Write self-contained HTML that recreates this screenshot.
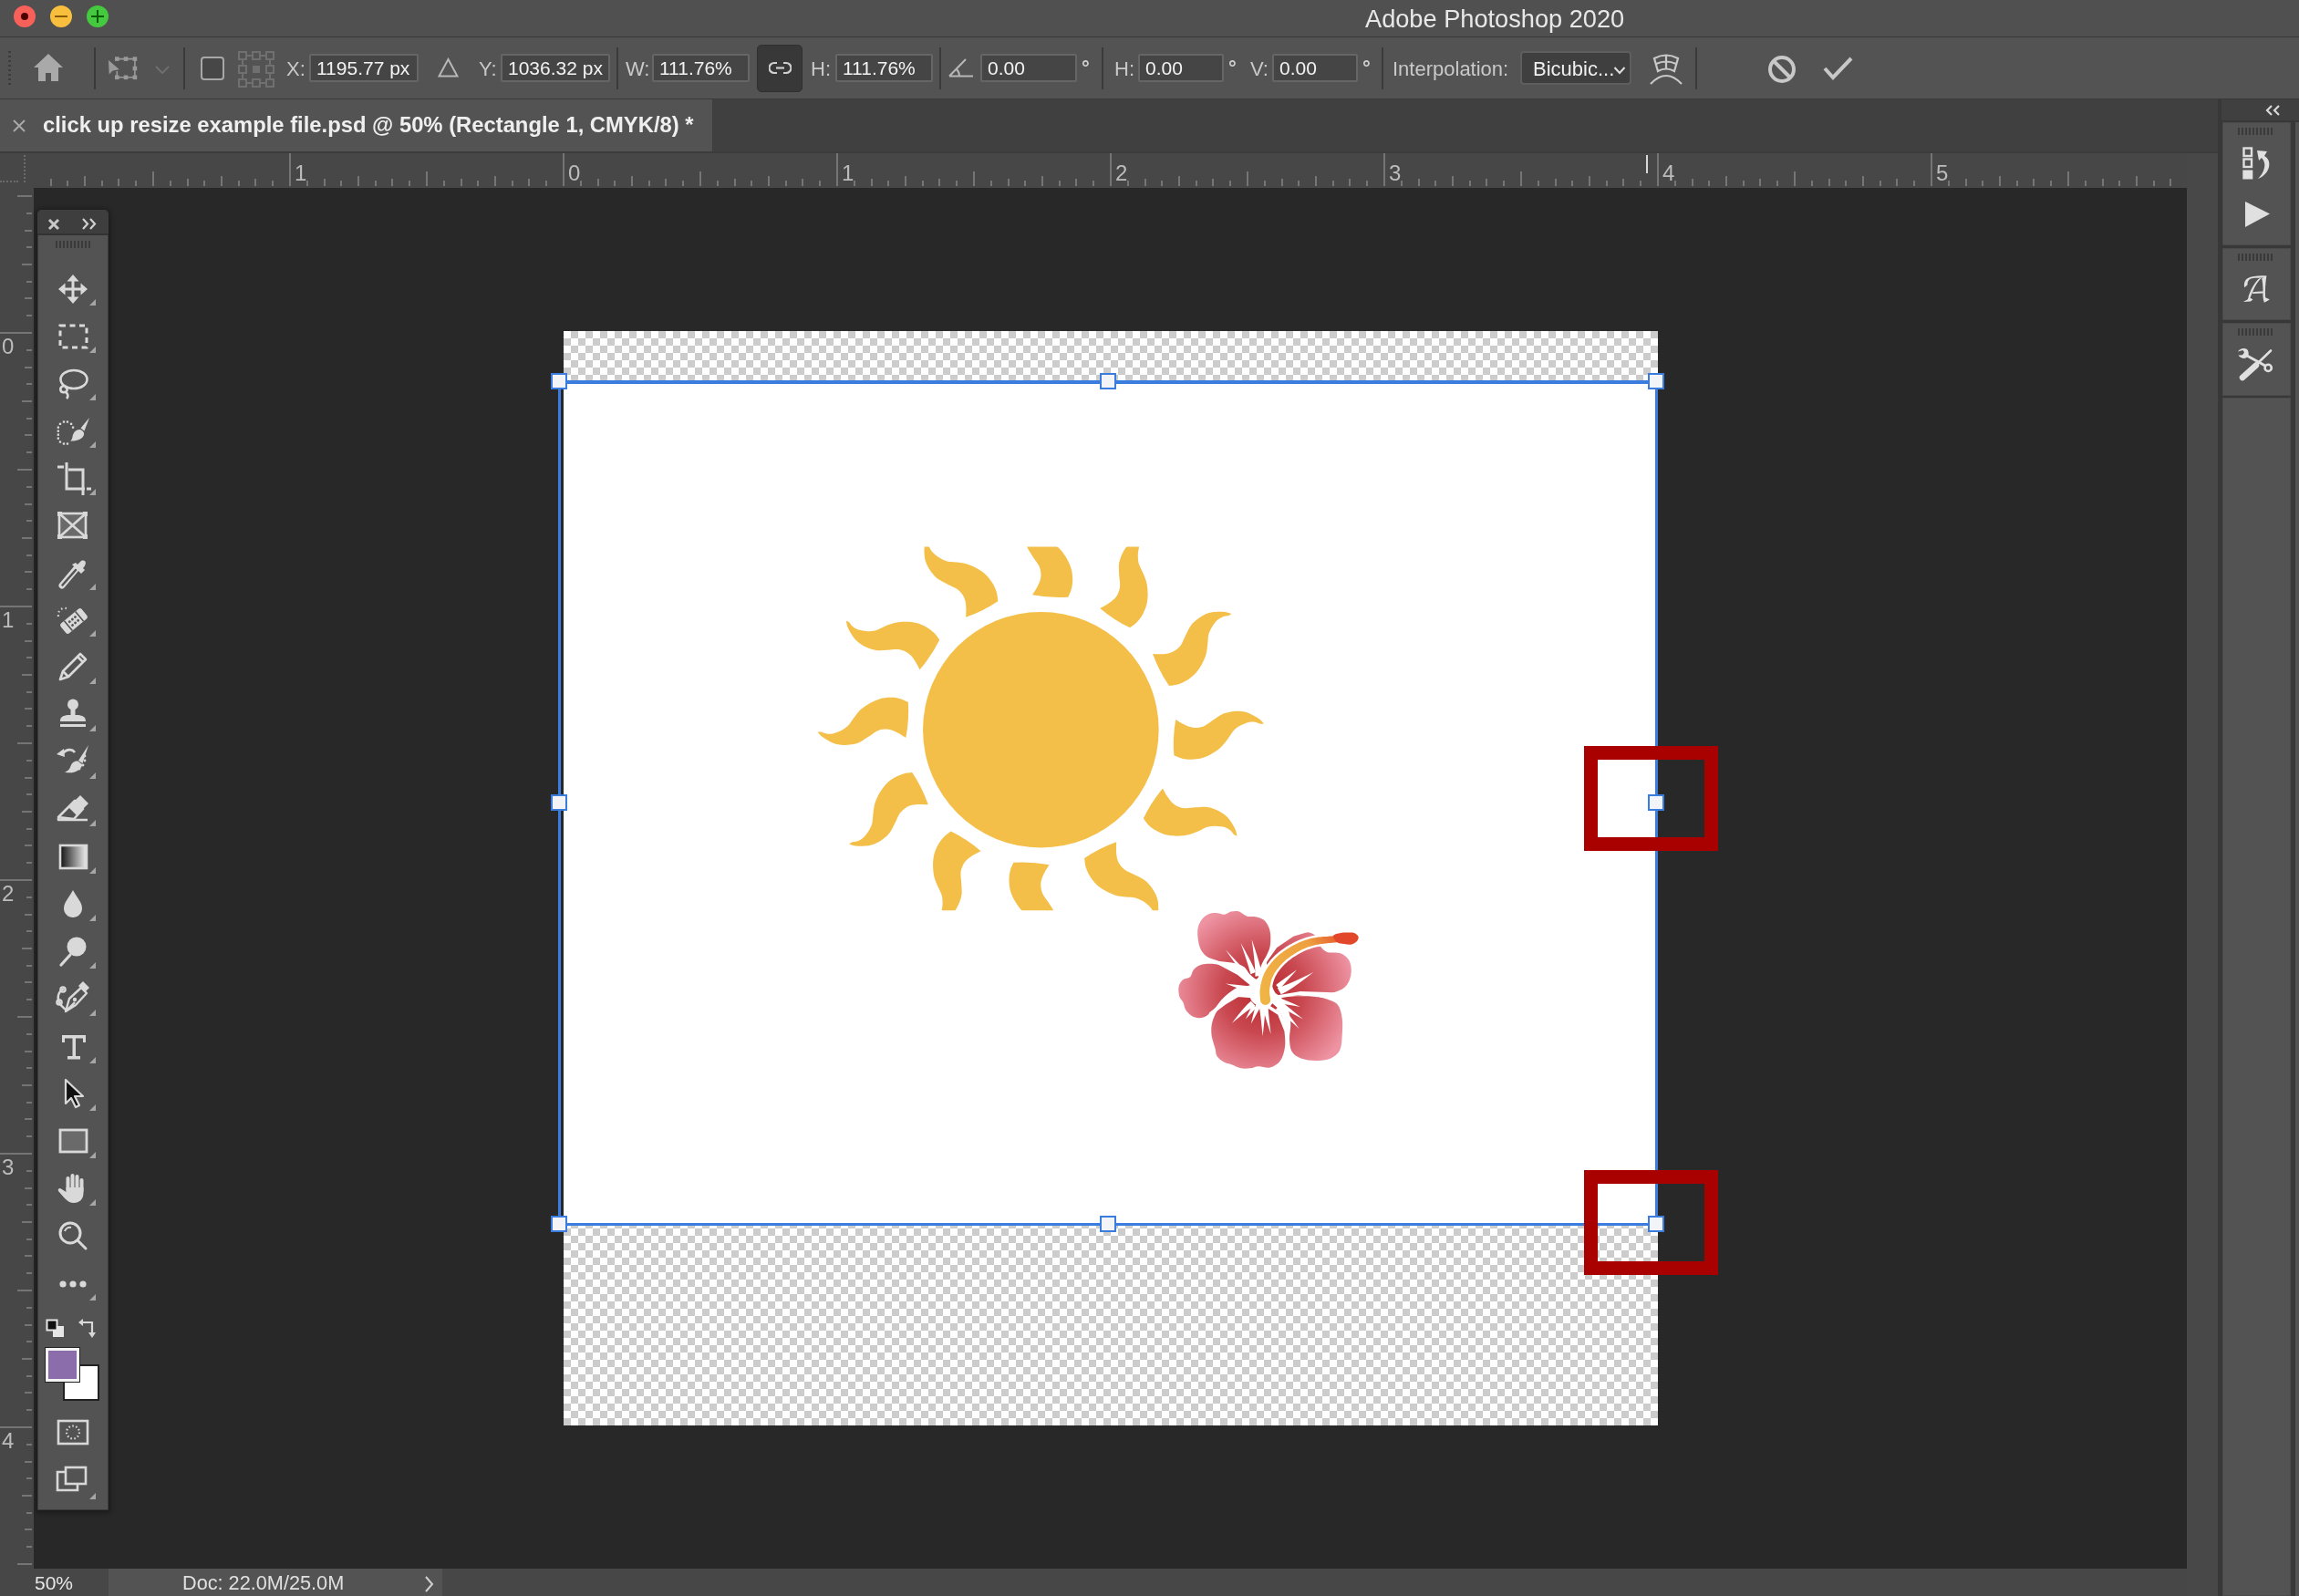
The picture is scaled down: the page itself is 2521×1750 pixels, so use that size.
<!DOCTYPE html><html><head><meta charset="utf-8"><style>
*{box-sizing:border-box}
html,body{margin:0;padding:0;width:2521px;height:1750px;overflow:hidden;background:#282828;font-family:"Liberation Sans",sans-serif}
.a{position:absolute}
.t{will-change:transform}
.lbl{position:absolute;will-change:transform;color:#c9c9c9;font-size:22px;line-height:1}
.inp{position:absolute;background:#454545;border:2px solid #666;border-radius:2px;color:#f2f2f2;font-size:21px;line-height:1}
.inp span{will-change:transform;position:absolute;left:6px;top:3px}
.rl{will-change:transform;color:#bcbcbc;font-size:24px;line-height:1}
.sep{position:absolute;width:2px;background:#3a3a3a}
</style></head><body><div class="a" style="left:0;top:0;width:2521px;height:40px;background:#505050"></div>
<div class="a" style="left:0;top:40px;width:2521px;height:1px;background:#383838"></div>
<div class="a" style="left:15px;top:6px;width:24px;height:24px;border-radius:50%;background:#f8605a"></div>
<div class="a" style="left:55px;top:6px;width:24px;height:24px;border-radius:50%;background:#f8bf3e"></div>
<div class="a" style="left:95px;top:6px;width:24px;height:24px;border-radius:50%;background:#45c93f"></div>
<div class="a" style="left:23px;top:14px;width:8px;height:8px;border-radius:50%;background:#4d0000"></div>
<div class="a" style="left:60px;top:17px;width:14px;height:2px;background:#8a5a00"></div>
<div class="a" style="left:100px;top:17px;width:14px;height:2px;background:#0a5a00"></div>
<div class="a" style="left:106px;top:11px;width:2px;height:14px;background:#0a5a00"></div>
<div class="a t" style="left:1497px;top:7px;font-size:27.2px;line-height:1;color:#e8e8e8;white-space:nowrap">Adobe Photoshop 2020</div>
<div class="a" style="left:0;top:41px;width:2521px;height:67px;background:#535353"></div>
<div class="a" style="left:0;top:108px;width:2521px;height:1px;background:#3a3a3a"></div>
<div class="a" style="left:9px;top:56px;width:3px;height:38px;background:repeating-linear-gradient(#3c3c3c 0 2px,transparent 2px 5px)"></div><svg class="a" style="left:36px;top:58px" width="34" height="32" viewBox="0 0 34 32"><path d="M17,1 L33,16 L28,16 L28,31 L20,31 L20,22 L14,22 L14,31 L6,31 L6,16 L1,16 Z" fill="#a9a9a9"/></svg><div class="sep" style="left:103px;top:52px;height:46px"></div><div class="sep" style="left:201px;top:52px;height:46px"></div><div class="sep" style="left:676px;top:52px;height:46px"></div><div class="sep" style="left:1030px;top:52px;height:46px"></div><div class="sep" style="left:1208px;top:52px;height:46px"></div><div class="sep" style="left:1515px;top:52px;height:46px"></div><div class="sep" style="left:1859px;top:52px;height:46px"></div><svg class="a" style="left:118px;top:60px" width="34" height="30" viewBox="0 0 34 30"><g fill="none" stroke="#9a9a9a" stroke-width="1.6"><path d="M10.3,4.6 H29.9 V24.8 H10.3 V18"/></g><g fill="#9a9a9a"><rect x="8.0" y="2.3" width="4.6" height="4.6"/><rect x="17.7" y="2.3" width="4.6" height="4.6"/><rect x="27.6" y="2.3" width="4.6" height="4.6"/><rect x="27.6" y="12.7" width="4.6" height="4.6"/><rect x="27.6" y="22.5" width="4.6" height="4.6"/><rect x="17.7" y="22.5" width="4.6" height="4.6"/><rect x="8.0" y="22.5" width="4.6" height="4.6"/></g><path d="M0.5,5 L1.2,22.5 L5.5,18 L13.8,16.5 Z" fill="#9a9a9a" stroke="#535353" stroke-width="1"/></svg><svg class="a" style="left:170px;top:72px" width="16" height="10" viewBox="0 0 16 10"><path d="M1,1 L8,8 L15,1" fill="none" stroke="#6f6f6f" stroke-width="2"/></svg><div class="a" style="left:220px;top:62px;width:26px;height:26px;border:2px solid #a8a8a8;border-radius:4px;background:#474747"></div><svg class="a" style="left:261px;top:56px" width="40" height="40" viewBox="0 0 40 40"><g fill="none" stroke="#707070" stroke-width="2"><rect x="1" y="1" width="8" height="8"/><rect x="1" y="16" width="8" height="8"/><rect x="1" y="31" width="8" height="8"/><rect x="16" y="1" width="8" height="8"/><rect x="16" y="31" width="8" height="8"/><rect x="31" y="1" width="8" height="8"/><rect x="31" y="16" width="8" height="8"/><rect x="31" y="31" width="8" height="8"/><path d="M9,5 H16 M24,5 H31 M9,35 H16 M24,35 H31 M5,9 V16 M5,24 V31 M35,9 V16 M35,24 V31"/></g><rect x="16" y="16" width="8" height="8" fill="#707070"/></svg><div class="lbl" style="left:314px;top:65px">X:</div><div class="inp" style="left:339px;top:59px;width:120px;height:31px"><span>1195.77 px</span></div><svg class="a" style="left:480px;top:63px" width="23" height="22" viewBox="0 0 23 22"><path d="M11.5,2 L21.5,20.5 L1.5,20.5 Z" fill="none" stroke="#b8b8b8" stroke-width="2"/></svg><div class="lbl" style="left:525px;top:65px">Y:</div><div class="inp" style="left:549px;top:59px;width:120px;height:31px"><span>1036.32 px</span></div><div class="lbl" style="left:686px;top:65px">W:</div><div class="inp" style="left:715px;top:59px;width:107px;height:31px"><span>111.76%</span></div><div class="a" style="left:830px;top:49px;width:50px;height:52px;background:#383838;border:1px solid #2f2f2f;border-radius:5px"></div><svg class="a" style="left:843px;top:66px" width="25" height="18" viewBox="0 0 25 18"><g fill="none" stroke="#d0d0d0" stroke-width="2.2"><path d="M9,3 H6 A5.5,5.5 0 0 0 6,14 H9"/><path d="M16,3 H19 A5.5,5.5 0 0 1 19,14 H16"/><path d="M8,8.5 H17"/></g></svg><div class="lbl" style="left:889px;top:65px">H:</div><div class="inp" style="left:916px;top:59px;width:107px;height:31px"><span>111.76%</span></div><svg class="a" style="left:1040px;top:63px" width="28" height="22" viewBox="0 0 28 22"><g fill="none" stroke="#b8b8b8" stroke-width="2"><path d="M1,20.5 H27 M1,20.5 L19,2"/><path d="M12,20.5 A11,11 0 0 0 9,13"/></g></svg><div class="inp" style="left:1075px;top:59px;width:106px;height:31px"><span>0.00</span></div><div class="a" style="left:1186px;top:62px;color:#d0d0d0;font-size:22px;font-weight:bold;will-change:transform">°</div><div class="lbl" style="left:1222px;top:65px">H:</div><div class="inp" style="left:1248px;top:59px;width:94px;height:31px"><span>0.00</span></div><div class="a" style="left:1347px;top:62px;color:#d0d0d0;font-size:22px;font-weight:bold;will-change:transform">°</div><div class="lbl" style="left:1371px;top:65px">V:</div><div class="inp" style="left:1395px;top:59px;width:94px;height:31px"><span>0.00</span></div><div class="a" style="left:1494px;top:62px;color:#d0d0d0;font-size:22px;font-weight:bold;will-change:transform">°</div><div class="lbl" style="left:1527px;top:65px">Interpolation:</div><div class="a" style="left:1667px;top:56px;width:122px;height:37px;background:#3f3f3f;border:2px solid #5e5e5e;border-radius:4px"></div><div class="a t" style="left:1681px;top:65px;color:#f0f0f0;font-size:22px;line-height:1;white-space:nowrap">Bicubic...</div><svg class="a" style="left:1769px;top:72px" width="14" height="10" viewBox="0 0 14 10"><path d="M1.5,2 L7,8 L12.5,2" fill="none" stroke="#e0e0e0" stroke-width="2"/></svg><svg class="a" style="left:1808px;top:58px" width="38" height="36" viewBox="0 0 38 36"><g fill="none" stroke="#c8c8c8" stroke-width="2.2"><path d="M6,6 Q19,-1 32,6 L28,20 Q19,15 10,20 Z"/><path d="M19,2 V17 M8,12 Q19,7 30,12"/><path d="M2,34 Q19,16 36,34"/></g></svg><svg class="a" style="left:1937px;top:59px" width="34" height="34" viewBox="0 0 34 34"><g fill="none" stroke="#c8c8c8" stroke-width="4"><circle cx="17" cy="17" r="13"/><path d="M8,8 L26,26"/></g></svg><svg class="a" style="left:1999px;top:61px" width="34" height="28" viewBox="0 0 34 28"><path d="M2,14 L11,24 L31,3" fill="none" stroke="#c8c8c8" stroke-width="4"/></svg>
<div class="a" style="left:0;top:109px;width:2521px;height:58px;background:#404040"></div>
<div class="a" style="left:0;top:109px;width:781px;height:57px;background:#535353"></div>
<div class="a" style="left:781px;top:109px;width:1px;height:57px;background:#3e3e3e"></div>
<div class="a" style="left:0;top:166px;width:2436px;height:2px;background:#3c3c3c"></div>
<div class="a t" style="left:47px;top:125px;font-size:23.8px;font-weight:bold;line-height:1;color:#efefef;white-space:nowrap">click up resize example file.psd @ 50% (Rectangle 1, CMYK/8) *</div>
<svg class="a" style="left:14px;top:131px" width="14" height="14" viewBox="0 0 14 14"><path d="M1,1 L13,13 M13,1 L1,13" stroke="#a8a8a8" stroke-width="2"/></svg>
<div class="a" style="left:0;top:168px;width:2398px;height:38px;background:#474747"></div>
<div class="a" style="left:0;top:168px;width:37px;height:1582px;background:#474747"></div>
<svg class="a" style="left:0;top:0" width="2521" height="210"><g fill="#757575"><rect x="55" y="196" width="2" height="8"/><rect x="73" y="198" width="2" height="6"/><rect x="92" y="193" width="2" height="11"/><rect x="111" y="198" width="2" height="6"/><rect x="129" y="196" width="2" height="8"/><rect x="148" y="198" width="2" height="6"/><rect x="167" y="188" width="2" height="16"/><rect x="186" y="198" width="2" height="6"/><rect x="205" y="196" width="2" height="8"/><rect x="223" y="198" width="2" height="6"/><rect x="242" y="193" width="2" height="11"/><rect x="261" y="198" width="2" height="6"/><rect x="279" y="196" width="2" height="8"/><rect x="298" y="198" width="2" height="6"/><rect x="317" y="168" width="2" height="36"/><rect x="336" y="198" width="2" height="6"/><rect x="355" y="196" width="2" height="8"/><rect x="373" y="198" width="2" height="6"/><rect x="392" y="193" width="2" height="11"/><rect x="411" y="198" width="2" height="6"/><rect x="429" y="196" width="2" height="8"/><rect x="448" y="198" width="2" height="6"/><rect x="467" y="188" width="2" height="16"/><rect x="486" y="198" width="2" height="6"/><rect x="505" y="196" width="2" height="8"/><rect x="523" y="198" width="2" height="6"/><rect x="542" y="193" width="2" height="11"/><rect x="561" y="198" width="2" height="6"/><rect x="579" y="196" width="2" height="8"/><rect x="598" y="198" width="2" height="6"/><rect x="617" y="168" width="2" height="36"/><rect x="636" y="198" width="2" height="6"/><rect x="655" y="196" width="2" height="8"/><rect x="673" y="198" width="2" height="6"/><rect x="692" y="193" width="2" height="11"/><rect x="711" y="198" width="2" height="6"/><rect x="729" y="196" width="2" height="8"/><rect x="748" y="198" width="2" height="6"/><rect x="767" y="188" width="2" height="16"/><rect x="786" y="198" width="2" height="6"/><rect x="805" y="196" width="2" height="8"/><rect x="823" y="198" width="2" height="6"/><rect x="842" y="193" width="2" height="11"/><rect x="861" y="198" width="2" height="6"/><rect x="879" y="196" width="2" height="8"/><rect x="898" y="198" width="2" height="6"/><rect x="917" y="168" width="2" height="36"/><rect x="936" y="198" width="2" height="6"/><rect x="955" y="196" width="2" height="8"/><rect x="973" y="198" width="2" height="6"/><rect x="992" y="193" width="2" height="11"/><rect x="1011" y="198" width="2" height="6"/><rect x="1029" y="196" width="2" height="8"/><rect x="1048" y="198" width="2" height="6"/><rect x="1067" y="188" width="2" height="16"/><rect x="1086" y="198" width="2" height="6"/><rect x="1105" y="196" width="2" height="8"/><rect x="1123" y="198" width="2" height="6"/><rect x="1142" y="193" width="2" height="11"/><rect x="1161" y="198" width="2" height="6"/><rect x="1179" y="196" width="2" height="8"/><rect x="1198" y="198" width="2" height="6"/><rect x="1217" y="168" width="2" height="36"/><rect x="1236" y="198" width="2" height="6"/><rect x="1255" y="196" width="2" height="8"/><rect x="1273" y="198" width="2" height="6"/><rect x="1292" y="193" width="2" height="11"/><rect x="1311" y="198" width="2" height="6"/><rect x="1329" y="196" width="2" height="8"/><rect x="1348" y="198" width="2" height="6"/><rect x="1367" y="188" width="2" height="16"/><rect x="1386" y="198" width="2" height="6"/><rect x="1405" y="196" width="2" height="8"/><rect x="1423" y="198" width="2" height="6"/><rect x="1442" y="193" width="2" height="11"/><rect x="1461" y="198" width="2" height="6"/><rect x="1479" y="196" width="2" height="8"/><rect x="1498" y="198" width="2" height="6"/><rect x="1517" y="168" width="2" height="36"/><rect x="1536" y="198" width="2" height="6"/><rect x="1555" y="196" width="2" height="8"/><rect x="1573" y="198" width="2" height="6"/><rect x="1592" y="193" width="2" height="11"/><rect x="1611" y="198" width="2" height="6"/><rect x="1629" y="196" width="2" height="8"/><rect x="1648" y="198" width="2" height="6"/><rect x="1667" y="188" width="2" height="16"/><rect x="1686" y="198" width="2" height="6"/><rect x="1705" y="196" width="2" height="8"/><rect x="1723" y="198" width="2" height="6"/><rect x="1742" y="193" width="2" height="11"/><rect x="1761" y="198" width="2" height="6"/><rect x="1779" y="196" width="2" height="8"/><rect x="1798" y="198" width="2" height="6"/><rect x="1817" y="168" width="2" height="36"/><rect x="1836" y="198" width="2" height="6"/><rect x="1855" y="196" width="2" height="8"/><rect x="1873" y="198" width="2" height="6"/><rect x="1892" y="193" width="2" height="11"/><rect x="1911" y="198" width="2" height="6"/><rect x="1929" y="196" width="2" height="8"/><rect x="1948" y="198" width="2" height="6"/><rect x="1967" y="188" width="2" height="16"/><rect x="1986" y="198" width="2" height="6"/><rect x="2005" y="196" width="2" height="8"/><rect x="2023" y="198" width="2" height="6"/><rect x="2042" y="193" width="2" height="11"/><rect x="2061" y="198" width="2" height="6"/><rect x="2079" y="196" width="2" height="8"/><rect x="2098" y="198" width="2" height="6"/><rect x="2117" y="168" width="2" height="36"/><rect x="2136" y="198" width="2" height="6"/><rect x="2155" y="196" width="2" height="8"/><rect x="2173" y="198" width="2" height="6"/><rect x="2192" y="193" width="2" height="11"/><rect x="2211" y="198" width="2" height="6"/><rect x="2229" y="196" width="2" height="8"/><rect x="2248" y="198" width="2" height="6"/><rect x="2267" y="188" width="2" height="16"/><rect x="2286" y="198" width="2" height="6"/><rect x="2305" y="196" width="2" height="8"/><rect x="2323" y="198" width="2" height="6"/><rect x="2342" y="193" width="2" height="11"/><rect x="2361" y="198" width="2" height="6"/><rect x="2379" y="196" width="2" height="8"/></g></svg><div class="a rl" style="left:323px;top:178px">1</div><div class="a rl" style="left:623px;top:178px">0</div><div class="a rl" style="left:923px;top:178px">1</div><div class="a rl" style="left:1223px;top:178px">2</div><div class="a rl" style="left:1523px;top:178px">3</div><div class="a rl" style="left:1823px;top:178px">4</div><div class="a rl" style="left:2123px;top:178px">5</div><svg class="a" style="left:0;top:0" width="40" height="1750"><g fill="#757575"><rect x="19" y="214" width="16" height="2"/><rect x="29" y="233" width="6" height="2"/><rect x="27" y="252" width="8" height="2"/><rect x="29" y="270" width="6" height="2"/><rect x="24" y="289" width="11" height="2"/><rect x="29" y="308" width="6" height="2"/><rect x="27" y="326" width="8" height="2"/><rect x="29" y="345" width="6" height="2"/><rect x="0" y="364" width="35" height="2"/><rect x="29" y="383" width="6" height="2"/><rect x="27" y="402" width="8" height="2"/><rect x="29" y="420" width="6" height="2"/><rect x="24" y="439" width="11" height="2"/><rect x="29" y="458" width="6" height="2"/><rect x="27" y="476" width="8" height="2"/><rect x="29" y="495" width="6" height="2"/><rect x="19" y="514" width="16" height="2"/><rect x="29" y="533" width="6" height="2"/><rect x="27" y="552" width="8" height="2"/><rect x="29" y="570" width="6" height="2"/><rect x="24" y="589" width="11" height="2"/><rect x="29" y="608" width="6" height="2"/><rect x="27" y="626" width="8" height="2"/><rect x="29" y="645" width="6" height="2"/><rect x="0" y="664" width="35" height="2"/><rect x="29" y="683" width="6" height="2"/><rect x="27" y="702" width="8" height="2"/><rect x="29" y="720" width="6" height="2"/><rect x="24" y="739" width="11" height="2"/><rect x="29" y="758" width="6" height="2"/><rect x="27" y="776" width="8" height="2"/><rect x="29" y="795" width="6" height="2"/><rect x="19" y="814" width="16" height="2"/><rect x="29" y="833" width="6" height="2"/><rect x="27" y="852" width="8" height="2"/><rect x="29" y="870" width="6" height="2"/><rect x="24" y="889" width="11" height="2"/><rect x="29" y="908" width="6" height="2"/><rect x="27" y="926" width="8" height="2"/><rect x="29" y="945" width="6" height="2"/><rect x="0" y="964" width="35" height="2"/><rect x="29" y="983" width="6" height="2"/><rect x="27" y="1002" width="8" height="2"/><rect x="29" y="1020" width="6" height="2"/><rect x="24" y="1039" width="11" height="2"/><rect x="29" y="1058" width="6" height="2"/><rect x="27" y="1076" width="8" height="2"/><rect x="29" y="1095" width="6" height="2"/><rect x="19" y="1114" width="16" height="2"/><rect x="29" y="1133" width="6" height="2"/><rect x="27" y="1152" width="8" height="2"/><rect x="29" y="1170" width="6" height="2"/><rect x="24" y="1189" width="11" height="2"/><rect x="29" y="1208" width="6" height="2"/><rect x="27" y="1226" width="8" height="2"/><rect x="29" y="1245" width="6" height="2"/><rect x="0" y="1264" width="35" height="2"/><rect x="29" y="1283" width="6" height="2"/><rect x="27" y="1302" width="8" height="2"/><rect x="29" y="1320" width="6" height="2"/><rect x="24" y="1339" width="11" height="2"/><rect x="29" y="1358" width="6" height="2"/><rect x="27" y="1376" width="8" height="2"/><rect x="29" y="1395" width="6" height="2"/><rect x="19" y="1414" width="16" height="2"/><rect x="29" y="1433" width="6" height="2"/><rect x="27" y="1452" width="8" height="2"/><rect x="29" y="1470" width="6" height="2"/><rect x="24" y="1489" width="11" height="2"/><rect x="29" y="1508" width="6" height="2"/><rect x="27" y="1526" width="8" height="2"/><rect x="29" y="1545" width="6" height="2"/><rect x="0" y="1564" width="35" height="2"/><rect x="29" y="1583" width="6" height="2"/><rect x="27" y="1602" width="8" height="2"/><rect x="29" y="1620" width="6" height="2"/><rect x="24" y="1639" width="11" height="2"/><rect x="29" y="1658" width="6" height="2"/><rect x="27" y="1676" width="8" height="2"/><rect x="29" y="1695" width="6" height="2"/><rect x="19" y="1714" width="16" height="2"/></g></svg><div class="a rl" style="left:2px;top:368px">0</div><div class="a rl" style="left:2px;top:668px">1</div><div class="a rl" style="left:2px;top:968px">2</div><div class="a rl" style="left:2px;top:1268px">3</div><div class="a rl" style="left:2px;top:1568px">4</div><div class="a" style="left:26px;top:170px;width:0;height:30px;border-left:2px dotted #6a6a6a"></div><div class="a" style="left:0;top:198px;width:20px;height:0;border-top:2px dotted #6a6a6a"></div>
<div class="a" style="left:1805px;top:170px;width:2px;height:20px;background:#d8d8d8"></div>
<div class="a" style="left:37px;top:206px;width:2361px;height:1514px;background:#282828"></div>
<div class="a" style="left:2398px;top:168px;width:34px;height:1582px;background:#484848"></div><div class="a" style="left:2432px;top:108px;width:89px;height:1642px;background:#383838"></div><div class="a" style="left:2436px;top:109px;width:85px;height:23px;background:#404040"></div><svg class="a" style="left:2484px;top:115px" width="17" height="12" viewBox="0 0 17 12"><path d="M7,1 L2,6 L7,11 M15,1 L10,6 L15,11" stroke="#d8d8d8" stroke-width="2.2" fill="none"/></svg><div class="a" style="left:2437px;top:134px;width:75px;height:135px;background:#535353;border:1px solid #4a4a4a"></div><div class="a" style="left:2437px;top:272px;width:75px;height:79px;background:#535353;border:1px solid #4a4a4a"></div><div class="a" style="left:2437px;top:354px;width:75px;height:80px;background:#535353;border:1px solid #4a4a4a"></div><div class="a" style="left:2437px;top:436px;width:75px;height:1314px;background:#535353;border:1px solid #4a4a4a"></div><div class="a" style="left:2517px;top:134px;width:4px;height:1616px;background:#535353"></div><div class="a" style="left:2454px;top:140px;width:39px;height:8px;background:repeating-linear-gradient(90deg,#3a3a3a 0 2px,transparent 2px 4px)"></div><div class="a" style="left:2454px;top:278px;width:39px;height:8px;background:repeating-linear-gradient(90deg,#3a3a3a 0 2px,transparent 2px 4px)"></div><div class="a" style="left:2454px;top:360px;width:39px;height:8px;background:repeating-linear-gradient(90deg,#3a3a3a 0 2px,transparent 2px 4px)"></div><svg class="a" style="left:2458px;top:160px" width="34" height="38" viewBox="0 0 34 38"><g fill="none" stroke="#e0e0e0" stroke-width="2.4"><rect x="2.5" y="2.5" width="8.5" height="8.5"/><rect x="2.5" y="14.5" width="8.5" height="8.5"/></g><rect x="1.3" y="26.5" width="11" height="10" fill="#e0e0e0"/><path d="M18,36 C26,33 32,25 30,17 C29,14 27,12 25,11 L28,6 L17,5 L19,16 L22,13 C25,16 26,20 25,24 C24,29 21,33 18,36Z" fill="#e0e0e0"/></svg><svg class="a" style="left:2461px;top:220px" width="30" height="30" viewBox="0 0 30 30"><path d="M1,1 L28,14.5 L1,29 Z" fill="#e0e0e0"/></svg><svg class="a" style="left:2459px;top:301px" width="32" height="32" viewBox="-1 -1 32 32"><g fill="#e0e0e0"><path d="M1.3,13.2 C0.2,9 1.5,5 5,3 C9,0.8 16,0 25.4,0.4 L24.6,2.6 C19,2.8 13,2.4 8.5,3.6 C5.5,4.6 4.2,7.5 4.6,10.3 Z"/><path d="M25.4,0.4 C24.2,8 23.6,16 24.1,24.1 C25.5,25.3 27.2,25.8 28.9,26.3 C27,27.8 24.8,28.8 22.8,29.8 C21.6,26 21.2,22 21.5,18 C21.6,12 21,7 20.2,3.2 Z"/><path d="M20,2.6 C16,6.5 12.6,12 10.6,17 C9.3,20 8.3,22.5 7.4,24.6 C8.2,25.2 9.4,25.8 10.5,26.3 C9.6,27.2 8.8,27.9 7.9,28.5 C5.3,28.8 2.6,28.9 0,28.9 C1.6,28 3.4,27 4.6,26.2 C5.4,25.2 5.6,24.5 5.5,23.6 C7.6,16.5 11,9.5 17,3.4 Z"/><path d="M10.3,18.2 C14,17.7 18,17.5 21.9,17.6 L21.8,19.4 C18,19.4 14,19.6 10,20 Z"/></g></svg><svg class="a" style="left:2453px;top:381px" width="42" height="38" viewBox="0 0 42 38"><g stroke="#e0e0e0" fill="none" stroke-linecap="round"><path d="M11,9 L30,19.5" stroke-width="3"/><circle cx="34.2" cy="22.4" r="3.6" stroke-width="2.6"/><path d="M37,3.5 L23,17" stroke-width="2.6"/><path d="M21,19.5 L6,33" stroke-width="6.5"/></g><path d="M1,4.5 C3,1 8,0 11,2 C12.5,3.5 13,6 12.5,8.5 L10,11.5 C7,12.5 3.5,11.5 1.5,8.5 L6,8.2 L8,5.5 L6.5,3 Z" fill="#e0e0e0"/></svg>
<div class="a" style="left:0;top:1720px;width:2398px;height:30px;background:#474747"></div>
<div class="a" style="left:119px;top:1720px;width:366px;height:30px;background:#535353"></div>
<div class="a t" style="left:38px;top:1725px;font-size:21px;line-height:1;color:#e6e6e6">50%</div>
<div class="a t" style="left:200px;top:1725px;font-size:21.7px;line-height:1;color:#e0e0e0;white-space:nowrap">Doc: 22.0M/25.0M</div>
<svg class="a" style="left:465px;top:1727px" width="12" height="20" viewBox="0 0 12 20"><path d="M2,2 L9,10 L2,18" fill="none" stroke="#d0d0d0" stroke-width="2"/></svg>
<div class="a" style="left:618px;top:363px;width:1200px;height:1200px;background:conic-gradient(#ccc 25%,#fff 0 50%,#ccc 0 75%,#fff 0) 0 0/16px 16px"></div>
<div class="a" style="left:618px;top:420px;width:1198px;height:921px;background:#fff"></div>
<svg class="a" style="left:0;top:0" width="2521" height="1750" viewBox="0 0 2521 1750"><defs><clipPath id="sunclip"><rect x="850" y="599.4" width="600" height="398.8"/></clipPath></defs><g clip-path="url(#sunclip)" fill="#f3bf48"><circle cx="1141.35" cy="800.25" r="129.3"/><path d="M1275.06,864.42 C1275.8,865.8 1278.0,870.1 1279.6,872.6 C1281.2,875.1 1282.8,877.5 1284.7,879.4 C1286.6,881.3 1288.4,882.8 1290.9,883.9 C1293.4,885.0 1296.1,886.0 1299.4,886.2 C1302.7,886.4 1306.9,885.5 1310.7,885.3 C1314.5,885.1 1318.7,884.6 1322.0,884.8 C1325.3,885.0 1327.7,885.8 1330.5,886.8 C1333.3,887.7 1336.5,889.2 1339.0,890.7 C1341.5,892.2 1343.7,893.8 1345.7,895.8 C1347.7,897.8 1349.3,900.2 1350.8,902.6 C1352.3,905.0 1353.8,907.6 1354.8,910.0 C1355.8,912.4 1356.2,915.6 1356.5,916.7 C1355.9,916.4 1354.3,916.0 1353.1,915.0 C1351.9,914.0 1350.8,911.8 1349.1,910.5 C1347.4,909.2 1345.5,907.9 1342.9,907.1 C1340.3,906.3 1336.3,905.8 1333.3,905.7 C1330.3,905.6 1327.3,905.9 1324.8,906.5 C1322.2,907.1 1320.3,908.4 1318.0,909.4 C1315.7,910.4 1313.3,911.8 1310.7,912.8 C1308.1,913.8 1305.5,915.0 1302.2,915.6 C1298.9,916.2 1294.7,916.7 1290.9,916.7 C1287.1,916.7 1283.4,916.5 1279.6,915.6 C1275.8,914.7 1271.6,912.9 1268.3,911.1 C1265.0,909.3 1262.2,907.1 1259.8,904.9 C1257.4,902.6 1254.8,898.7 1253.8,897.5 Q1262,880 1275.06,864.42 Z" transform="rotate(0 1141.35 800.25)"/><path d="M1275.06,864.42 C1275.8,865.8 1278.0,870.1 1279.6,872.6 C1281.2,875.1 1282.8,877.5 1284.7,879.4 C1286.6,881.3 1288.4,882.8 1290.9,883.9 C1293.4,885.0 1296.1,886.0 1299.4,886.2 C1302.7,886.4 1306.9,885.5 1310.7,885.3 C1314.5,885.1 1318.7,884.6 1322.0,884.8 C1325.3,885.0 1327.7,885.8 1330.5,886.8 C1333.3,887.7 1336.5,889.2 1339.0,890.7 C1341.5,892.2 1343.7,893.8 1345.7,895.8 C1347.7,897.8 1349.3,900.2 1350.8,902.6 C1352.3,905.0 1353.8,907.6 1354.8,910.0 C1355.8,912.4 1356.2,915.6 1356.5,916.7 C1355.9,916.4 1354.3,916.0 1353.1,915.0 C1351.9,914.0 1350.8,911.8 1349.1,910.5 C1347.4,909.2 1345.5,907.9 1342.9,907.1 C1340.3,906.3 1336.3,905.8 1333.3,905.7 C1330.3,905.6 1327.3,905.9 1324.8,906.5 C1322.2,907.1 1320.3,908.4 1318.0,909.4 C1315.7,910.4 1313.3,911.8 1310.7,912.8 C1308.1,913.8 1305.5,915.0 1302.2,915.6 C1298.9,916.2 1294.7,916.7 1290.9,916.7 C1287.1,916.7 1283.4,916.5 1279.6,915.6 C1275.8,914.7 1271.6,912.9 1268.3,911.1 C1265.0,909.3 1262.2,907.1 1259.8,904.9 C1257.4,902.6 1254.8,898.7 1253.8,897.5 Q1262,880 1275.06,864.42 Z" transform="rotate(30.4 1141.35 800.25)"/><path d="M1275.06,864.42 C1275.8,865.8 1278.0,870.1 1279.6,872.6 C1281.2,875.1 1282.8,877.5 1284.7,879.4 C1286.6,881.3 1288.4,882.8 1290.9,883.9 C1293.4,885.0 1296.1,886.0 1299.4,886.2 C1302.7,886.4 1306.9,885.5 1310.7,885.3 C1314.5,885.1 1318.7,884.6 1322.0,884.8 C1325.3,885.0 1327.7,885.8 1330.5,886.8 C1333.3,887.7 1336.5,889.2 1339.0,890.7 C1341.5,892.2 1343.7,893.8 1345.7,895.8 C1347.7,897.8 1349.3,900.2 1350.8,902.6 C1352.3,905.0 1353.8,907.6 1354.8,910.0 C1355.8,912.4 1356.2,915.6 1356.5,916.7 C1355.9,916.4 1354.3,916.0 1353.1,915.0 C1351.9,914.0 1350.8,911.8 1349.1,910.5 C1347.4,909.2 1345.5,907.9 1342.9,907.1 C1340.3,906.3 1336.3,905.8 1333.3,905.7 C1330.3,905.6 1327.3,905.9 1324.8,906.5 C1322.2,907.1 1320.3,908.4 1318.0,909.4 C1315.7,910.4 1313.3,911.8 1310.7,912.8 C1308.1,913.8 1305.5,915.0 1302.2,915.6 C1298.9,916.2 1294.7,916.7 1290.9,916.7 C1287.1,916.7 1283.4,916.5 1279.6,915.6 C1275.8,914.7 1271.6,912.9 1268.3,911.1 C1265.0,909.3 1262.2,907.1 1259.8,904.9 C1257.4,902.6 1254.8,898.7 1253.8,897.5 Q1262,880 1275.06,864.42 Z" transform="rotate(60.8 1141.35 800.25)"/><path d="M1275.06,864.42 C1275.8,865.8 1278.0,870.1 1279.6,872.6 C1281.2,875.1 1282.8,877.5 1284.7,879.4 C1286.6,881.3 1288.4,882.8 1290.9,883.9 C1293.4,885.0 1296.1,886.0 1299.4,886.2 C1302.7,886.4 1306.9,885.5 1310.7,885.3 C1314.5,885.1 1318.7,884.6 1322.0,884.8 C1325.3,885.0 1327.7,885.8 1330.5,886.8 C1333.3,887.7 1336.5,889.2 1339.0,890.7 C1341.5,892.2 1343.7,893.8 1345.7,895.8 C1347.7,897.8 1349.3,900.2 1350.8,902.6 C1352.3,905.0 1353.8,907.6 1354.8,910.0 C1355.8,912.4 1356.2,915.6 1356.5,916.7 C1355.9,916.4 1354.3,916.0 1353.1,915.0 C1351.9,914.0 1350.8,911.8 1349.1,910.5 C1347.4,909.2 1345.5,907.9 1342.9,907.1 C1340.3,906.3 1336.3,905.8 1333.3,905.7 C1330.3,905.6 1327.3,905.9 1324.8,906.5 C1322.2,907.1 1320.3,908.4 1318.0,909.4 C1315.7,910.4 1313.3,911.8 1310.7,912.8 C1308.1,913.8 1305.5,915.0 1302.2,915.6 C1298.9,916.2 1294.7,916.7 1290.9,916.7 C1287.1,916.7 1283.4,916.5 1279.6,915.6 C1275.8,914.7 1271.6,912.9 1268.3,911.1 C1265.0,909.3 1262.2,907.1 1259.8,904.9 C1257.4,902.6 1254.8,898.7 1253.8,897.5 Q1262,880 1275.06,864.42 Z" transform="rotate(90.7 1141.35 800.25)"/><path d="M1275.06,864.42 C1275.8,865.8 1278.0,870.1 1279.6,872.6 C1281.2,875.1 1282.8,877.5 1284.7,879.4 C1286.6,881.3 1288.4,882.8 1290.9,883.9 C1293.4,885.0 1296.1,886.0 1299.4,886.2 C1302.7,886.4 1306.9,885.5 1310.7,885.3 C1314.5,885.1 1318.7,884.6 1322.0,884.8 C1325.3,885.0 1327.7,885.8 1330.5,886.8 C1333.3,887.7 1336.5,889.2 1339.0,890.7 C1341.5,892.2 1343.7,893.8 1345.7,895.8 C1347.7,897.8 1349.3,900.2 1350.8,902.6 C1352.3,905.0 1353.8,907.6 1354.8,910.0 C1355.8,912.4 1356.2,915.6 1356.5,916.7 C1355.9,916.4 1354.3,916.0 1353.1,915.0 C1351.9,914.0 1350.8,911.8 1349.1,910.5 C1347.4,909.2 1345.5,907.9 1342.9,907.1 C1340.3,906.3 1336.3,905.8 1333.3,905.7 C1330.3,905.6 1327.3,905.9 1324.8,906.5 C1322.2,907.1 1320.3,908.4 1318.0,909.4 C1315.7,910.4 1313.3,911.8 1310.7,912.8 C1308.1,913.8 1305.5,915.0 1302.2,915.6 C1298.9,916.2 1294.7,916.7 1290.9,916.7 C1287.1,916.7 1283.4,916.5 1279.6,915.6 C1275.8,914.7 1271.6,912.9 1268.3,911.1 C1265.0,909.3 1262.2,907.1 1259.8,904.9 C1257.4,902.6 1254.8,898.7 1253.8,897.5 Q1262,880 1275.06,864.42 Z" transform="rotate(120.8 1141.35 800.25)"/><path d="M1275.06,864.42 C1275.8,865.8 1278.0,870.1 1279.6,872.6 C1281.2,875.1 1282.8,877.5 1284.7,879.4 C1286.6,881.3 1288.4,882.8 1290.9,883.9 C1293.4,885.0 1296.1,886.0 1299.4,886.2 C1302.7,886.4 1306.9,885.5 1310.7,885.3 C1314.5,885.1 1318.7,884.6 1322.0,884.8 C1325.3,885.0 1327.7,885.8 1330.5,886.8 C1333.3,887.7 1336.5,889.2 1339.0,890.7 C1341.5,892.2 1343.7,893.8 1345.7,895.8 C1347.7,897.8 1349.3,900.2 1350.8,902.6 C1352.3,905.0 1353.8,907.6 1354.8,910.0 C1355.8,912.4 1356.2,915.6 1356.5,916.7 C1355.9,916.4 1354.3,916.0 1353.1,915.0 C1351.9,914.0 1350.8,911.8 1349.1,910.5 C1347.4,909.2 1345.5,907.9 1342.9,907.1 C1340.3,906.3 1336.3,905.8 1333.3,905.7 C1330.3,905.6 1327.3,905.9 1324.8,906.5 C1322.2,907.1 1320.3,908.4 1318.0,909.4 C1315.7,910.4 1313.3,911.8 1310.7,912.8 C1308.1,913.8 1305.5,915.0 1302.2,915.6 C1298.9,916.2 1294.7,916.7 1290.9,916.7 C1287.1,916.7 1283.4,916.5 1279.6,915.6 C1275.8,914.7 1271.6,912.9 1268.3,911.1 C1265.0,909.3 1262.2,907.1 1259.8,904.9 C1257.4,902.6 1254.8,898.7 1253.8,897.5 Q1262,880 1275.06,864.42 Z" transform="rotate(151.0 1141.35 800.25)"/><path d="M1275.06,864.42 C1275.8,865.8 1278.0,870.1 1279.6,872.6 C1281.2,875.1 1282.8,877.5 1284.7,879.4 C1286.6,881.3 1288.4,882.8 1290.9,883.9 C1293.4,885.0 1296.1,886.0 1299.4,886.2 C1302.7,886.4 1306.9,885.5 1310.7,885.3 C1314.5,885.1 1318.7,884.6 1322.0,884.8 C1325.3,885.0 1327.7,885.8 1330.5,886.8 C1333.3,887.7 1336.5,889.2 1339.0,890.7 C1341.5,892.2 1343.7,893.8 1345.7,895.8 C1347.7,897.8 1349.3,900.2 1350.8,902.6 C1352.3,905.0 1353.8,907.6 1354.8,910.0 C1355.8,912.4 1356.2,915.6 1356.5,916.7 C1355.9,916.4 1354.3,916.0 1353.1,915.0 C1351.9,914.0 1350.8,911.8 1349.1,910.5 C1347.4,909.2 1345.5,907.9 1342.9,907.1 C1340.3,906.3 1336.3,905.8 1333.3,905.7 C1330.3,905.6 1327.3,905.9 1324.8,906.5 C1322.2,907.1 1320.3,908.4 1318.0,909.4 C1315.7,910.4 1313.3,911.8 1310.7,912.8 C1308.1,913.8 1305.5,915.0 1302.2,915.6 C1298.9,916.2 1294.7,916.7 1290.9,916.7 C1287.1,916.7 1283.4,916.5 1279.6,915.6 C1275.8,914.7 1271.6,912.9 1268.3,911.1 C1265.0,909.3 1262.2,907.1 1259.8,904.9 C1257.4,902.6 1254.8,898.7 1253.8,897.5 Q1262,880 1275.06,864.42 Z" transform="rotate(180.8 1141.35 800.25)"/><path d="M1275.06,864.42 C1275.8,865.8 1278.0,870.1 1279.6,872.6 C1281.2,875.1 1282.8,877.5 1284.7,879.4 C1286.6,881.3 1288.4,882.8 1290.9,883.9 C1293.4,885.0 1296.1,886.0 1299.4,886.2 C1302.7,886.4 1306.9,885.5 1310.7,885.3 C1314.5,885.1 1318.7,884.6 1322.0,884.8 C1325.3,885.0 1327.7,885.8 1330.5,886.8 C1333.3,887.7 1336.5,889.2 1339.0,890.7 C1341.5,892.2 1343.7,893.8 1345.7,895.8 C1347.7,897.8 1349.3,900.2 1350.8,902.6 C1352.3,905.0 1353.8,907.6 1354.8,910.0 C1355.8,912.4 1356.2,915.6 1356.5,916.7 C1355.9,916.4 1354.3,916.0 1353.1,915.0 C1351.9,914.0 1350.8,911.8 1349.1,910.5 C1347.4,909.2 1345.5,907.9 1342.9,907.1 C1340.3,906.3 1336.3,905.8 1333.3,905.7 C1330.3,905.6 1327.3,905.9 1324.8,906.5 C1322.2,907.1 1320.3,908.4 1318.0,909.4 C1315.7,910.4 1313.3,911.8 1310.7,912.8 C1308.1,913.8 1305.5,915.0 1302.2,915.6 C1298.9,916.2 1294.7,916.7 1290.9,916.7 C1287.1,916.7 1283.4,916.5 1279.6,915.6 C1275.8,914.7 1271.6,912.9 1268.3,911.1 C1265.0,909.3 1262.2,907.1 1259.8,904.9 C1257.4,902.6 1254.8,898.7 1253.8,897.5 Q1262,880 1275.06,864.42 Z" transform="rotate(210.7 1141.35 800.25)"/><path d="M1275.06,864.42 C1275.8,865.8 1278.0,870.1 1279.6,872.6 C1281.2,875.1 1282.8,877.5 1284.7,879.4 C1286.6,881.3 1288.4,882.8 1290.9,883.9 C1293.4,885.0 1296.1,886.0 1299.4,886.2 C1302.7,886.4 1306.9,885.5 1310.7,885.3 C1314.5,885.1 1318.7,884.6 1322.0,884.8 C1325.3,885.0 1327.7,885.8 1330.5,886.8 C1333.3,887.7 1336.5,889.2 1339.0,890.7 C1341.5,892.2 1343.7,893.8 1345.7,895.8 C1347.7,897.8 1349.3,900.2 1350.8,902.6 C1352.3,905.0 1353.8,907.6 1354.8,910.0 C1355.8,912.4 1356.2,915.6 1356.5,916.7 C1355.9,916.4 1354.3,916.0 1353.1,915.0 C1351.9,914.0 1350.8,911.8 1349.1,910.5 C1347.4,909.2 1345.5,907.9 1342.9,907.1 C1340.3,906.3 1336.3,905.8 1333.3,905.7 C1330.3,905.6 1327.3,905.9 1324.8,906.5 C1322.2,907.1 1320.3,908.4 1318.0,909.4 C1315.7,910.4 1313.3,911.8 1310.7,912.8 C1308.1,913.8 1305.5,915.0 1302.2,915.6 C1298.9,916.2 1294.7,916.7 1290.9,916.7 C1287.1,916.7 1283.4,916.5 1279.6,915.6 C1275.8,914.7 1271.6,912.9 1268.3,911.1 C1265.0,909.3 1262.2,907.1 1259.8,904.9 C1257.4,902.6 1254.8,898.7 1253.8,897.5 Q1262,880 1275.06,864.42 Z" transform="rotate(240.8 1141.35 800.25)"/><path d="M1275.06,864.42 C1275.8,865.8 1278.0,870.1 1279.6,872.6 C1281.2,875.1 1282.8,877.5 1284.7,879.4 C1286.6,881.3 1288.4,882.8 1290.9,883.9 C1293.4,885.0 1296.1,886.0 1299.4,886.2 C1302.7,886.4 1306.9,885.5 1310.7,885.3 C1314.5,885.1 1318.7,884.6 1322.0,884.8 C1325.3,885.0 1327.7,885.8 1330.5,886.8 C1333.3,887.7 1336.5,889.2 1339.0,890.7 C1341.5,892.2 1343.7,893.8 1345.7,895.8 C1347.7,897.8 1349.3,900.2 1350.8,902.6 C1352.3,905.0 1353.8,907.6 1354.8,910.0 C1355.8,912.4 1356.2,915.6 1356.5,916.7 C1355.9,916.4 1354.3,916.0 1353.1,915.0 C1351.9,914.0 1350.8,911.8 1349.1,910.5 C1347.4,909.2 1345.5,907.9 1342.9,907.1 C1340.3,906.3 1336.3,905.8 1333.3,905.7 C1330.3,905.6 1327.3,905.9 1324.8,906.5 C1322.2,907.1 1320.3,908.4 1318.0,909.4 C1315.7,910.4 1313.3,911.8 1310.7,912.8 C1308.1,913.8 1305.5,915.0 1302.2,915.6 C1298.9,916.2 1294.7,916.7 1290.9,916.7 C1287.1,916.7 1283.4,916.5 1279.6,915.6 C1275.8,914.7 1271.6,912.9 1268.3,911.1 C1265.0,909.3 1262.2,907.1 1259.8,904.9 C1257.4,902.6 1254.8,898.7 1253.8,897.5 Q1262,880 1275.06,864.42 Z" transform="rotate(270.3 1141.35 800.25)"/><path d="M1275.06,864.42 C1275.8,865.8 1278.0,870.1 1279.6,872.6 C1281.2,875.1 1282.8,877.5 1284.7,879.4 C1286.6,881.3 1288.4,882.8 1290.9,883.9 C1293.4,885.0 1296.1,886.0 1299.4,886.2 C1302.7,886.4 1306.9,885.5 1310.7,885.3 C1314.5,885.1 1318.7,884.6 1322.0,884.8 C1325.3,885.0 1327.7,885.8 1330.5,886.8 C1333.3,887.7 1336.5,889.2 1339.0,890.7 C1341.5,892.2 1343.7,893.8 1345.7,895.8 C1347.7,897.8 1349.3,900.2 1350.8,902.6 C1352.3,905.0 1353.8,907.6 1354.8,910.0 C1355.8,912.4 1356.2,915.6 1356.5,916.7 C1355.9,916.4 1354.3,916.0 1353.1,915.0 C1351.9,914.0 1350.8,911.8 1349.1,910.5 C1347.4,909.2 1345.5,907.9 1342.9,907.1 C1340.3,906.3 1336.3,905.8 1333.3,905.7 C1330.3,905.6 1327.3,905.9 1324.8,906.5 C1322.2,907.1 1320.3,908.4 1318.0,909.4 C1315.7,910.4 1313.3,911.8 1310.7,912.8 C1308.1,913.8 1305.5,915.0 1302.2,915.6 C1298.9,916.2 1294.7,916.7 1290.9,916.7 C1287.1,916.7 1283.4,916.5 1279.6,915.6 C1275.8,914.7 1271.6,912.9 1268.3,911.1 C1265.0,909.3 1262.2,907.1 1259.8,904.9 C1257.4,902.6 1254.8,898.7 1253.8,897.5 Q1262,880 1275.06,864.42 Z" transform="rotate(300.2 1141.35 800.25)"/><path d="M1275.06,864.42 C1275.8,865.8 1278.0,870.1 1279.6,872.6 C1281.2,875.1 1282.8,877.5 1284.7,879.4 C1286.6,881.3 1288.4,882.8 1290.9,883.9 C1293.4,885.0 1296.1,886.0 1299.4,886.2 C1302.7,886.4 1306.9,885.5 1310.7,885.3 C1314.5,885.1 1318.7,884.6 1322.0,884.8 C1325.3,885.0 1327.7,885.8 1330.5,886.8 C1333.3,887.7 1336.5,889.2 1339.0,890.7 C1341.5,892.2 1343.7,893.8 1345.7,895.8 C1347.7,897.8 1349.3,900.2 1350.8,902.6 C1352.3,905.0 1353.8,907.6 1354.8,910.0 C1355.8,912.4 1356.2,915.6 1356.5,916.7 C1355.9,916.4 1354.3,916.0 1353.1,915.0 C1351.9,914.0 1350.8,911.8 1349.1,910.5 C1347.4,909.2 1345.5,907.9 1342.9,907.1 C1340.3,906.3 1336.3,905.8 1333.3,905.7 C1330.3,905.6 1327.3,905.9 1324.8,906.5 C1322.2,907.1 1320.3,908.4 1318.0,909.4 C1315.7,910.4 1313.3,911.8 1310.7,912.8 C1308.1,913.8 1305.5,915.0 1302.2,915.6 C1298.9,916.2 1294.7,916.7 1290.9,916.7 C1287.1,916.7 1283.4,916.5 1279.6,915.6 C1275.8,914.7 1271.6,912.9 1268.3,911.1 C1265.0,909.3 1262.2,907.1 1259.8,904.9 C1257.4,902.6 1254.8,898.7 1253.8,897.5 Q1262,880 1275.06,864.42 Z" transform="rotate(330 1141.35 800.25)"/></g></svg>
<svg class="a" style="left:0;top:0" width="2521" height="1750" viewBox="0 0 2521 1750"><defs><radialGradient id="pg" gradientUnits="userSpaceOnUse" cx="1385" cy="1088" r="100"><stop offset="0" stop-color="#b8282c"/><stop offset="0.45" stop-color="#c94850"/><stop offset="1" stop-color="#ee93a2"/></radialGradient><linearGradient id="sg" gradientUnits="userSpaceOnUse" x1="1386" y1="1096" x2="1490" y2="1028"><stop offset="0" stop-color="#f0b445"/><stop offset="0.6" stop-color="#eea040"/><stop offset="0.8" stop-color="#e86a32"/><stop offset="1" stop-color="#e2442a"/></linearGradient></defs><g fill="url(#pg)"><path d="M1313.3,1025.8 C1313.0,1021.9 1313.1,1019.2 1313.9,1016.2 C1314.7,1013.2 1316.2,1010.2 1318.1,1007.9 C1319.9,1005.6 1322.5,1003.5 1325.0,1002.4 C1327.5,1001.2 1330.2,1001.0 1333.2,1001.0 C1336.2,1001.0 1340.1,1002.9 1342.9,1002.7 C1345.7,1002.5 1347.3,1000.2 1349.8,999.6 C1352.3,999.0 1355.2,998.5 1358.1,999.3 C1361.0,1000.1 1363.9,1003.5 1367.0,1004.5 C1370.1,1005.5 1373.6,1004.5 1376.7,1005.2 C1379.8,1005.9 1383.2,1006.8 1385.6,1008.6 C1388.0,1010.4 1389.8,1013.3 1391.1,1016.2 C1392.4,1019.1 1393.0,1022.1 1393.2,1025.8 C1393.4,1029.5 1393.3,1034.4 1392.5,1038.2 C1391.7,1042.0 1390.0,1045.1 1388.4,1048.6 C1386.8,1052.0 1384.4,1055.0 1382.9,1058.9 C1381.4,1062.8 1381.1,1069.7 1379.5,1072.0 C1377.9,1074.3 1375.7,1074.7 1373.2,1072.7 C1370.7,1070.8 1368.1,1063.2 1364.3,1060.3 C1360.5,1057.4 1355.7,1056.7 1350.5,1055.5 C1345.3,1054.3 1337.8,1054.6 1333.2,1053.4 C1328.6,1052.2 1325.8,1050.9 1322.9,1048.6 C1320.0,1046.3 1317.6,1043.4 1316.0,1039.6 C1314.4,1035.8 1313.6,1029.7 1313.3,1025.8 Z"/><path d="M1371.1,1079.6 C1371.7,1077.4 1364.8,1072.5 1360.8,1069.3 C1356.8,1066.1 1351.6,1062.3 1347.0,1060.3 C1342.4,1058.3 1338.0,1057.7 1333.2,1057.2 C1328.4,1056.7 1322.1,1056.5 1318.1,1057.5 C1314.1,1058.5 1311.3,1060.7 1309.1,1063.0 C1306.9,1065.3 1307.0,1069.5 1305.0,1071.3 C1303.0,1073.1 1299.5,1072.4 1297.4,1074.1 C1295.3,1075.8 1293.3,1078.6 1292.6,1081.7 C1291.9,1084.8 1292.5,1089.8 1293.3,1092.7 C1294.1,1095.6 1296.2,1096.5 1297.4,1098.9 C1298.6,1101.3 1298.6,1104.7 1300.2,1107.2 C1301.8,1109.7 1304.5,1112.6 1307.0,1114.1 C1309.5,1115.6 1312.5,1116.3 1315.3,1116.2 C1318.1,1116.1 1320.8,1115.1 1323.6,1113.4 C1326.4,1111.7 1329.4,1108.5 1331.9,1105.8 C1334.4,1103.0 1336.3,1099.7 1338.8,1096.9 C1341.3,1094.2 1343.9,1091.7 1347.0,1089.3 C1350.1,1086.9 1353.4,1084.0 1357.4,1082.4 C1361.4,1080.8 1370.5,1081.8 1371.1,1079.6 Z"/><path d="M1378.0,1095.5 C1374.3,1094.5 1368.3,1090.9 1364.3,1090.3 C1360.3,1089.7 1357.4,1090.6 1353.9,1092.0 C1350.5,1093.4 1346.8,1096.1 1343.6,1098.9 C1340.4,1101.7 1337.0,1104.8 1334.6,1108.6 C1332.2,1112.4 1330.1,1117.6 1329.1,1121.7 C1328.1,1125.8 1328.2,1129.8 1328.4,1133.4 C1328.6,1137.0 1329.8,1140.3 1330.5,1143.1 C1331.2,1145.9 1331.9,1147.5 1332.6,1150.0 C1333.3,1152.5 1333.0,1155.8 1334.6,1158.2 C1336.2,1160.6 1339.5,1162.9 1342.2,1164.4 C1344.9,1165.9 1347.4,1166.1 1350.5,1167.2 C1353.6,1168.3 1357.4,1170.6 1360.8,1171.3 C1364.2,1172.0 1367.9,1171.6 1371.1,1171.3 C1374.3,1171.0 1376.5,1169.3 1380.1,1169.2 C1383.7,1169.1 1388.8,1171.5 1392.8,1170.4 C1396.8,1169.4 1401.3,1166.7 1404.0,1162.9 C1406.7,1159.2 1408.2,1153.6 1409.0,1147.9 C1409.8,1142.2 1409.8,1135.3 1409.0,1129.0 C1408.2,1122.7 1406.3,1115.1 1404.0,1110.3 C1401.7,1105.5 1398.2,1102.7 1395.3,1100.3 C1392.4,1097.9 1389.4,1096.8 1386.5,1096.0 C1383.6,1095.2 1381.7,1096.5 1378.0,1095.5 Z"/><path d="M1405.3,1094.0 C1404.5,1096.5 1411.1,1103.0 1412.8,1107.8 C1414.5,1112.6 1415.1,1117.6 1415.3,1122.8 C1415.5,1128.0 1413.8,1134.0 1414.0,1139.0 C1414.2,1144.0 1414.5,1149.3 1416.6,1152.9 C1418.7,1156.5 1422.2,1158.7 1426.6,1160.4 C1431.0,1162.1 1437.5,1162.9 1442.9,1162.9 C1448.3,1162.9 1454.8,1162.3 1459.2,1160.4 C1463.6,1158.5 1467.1,1155.8 1469.2,1151.6 C1471.3,1147.4 1471.3,1141.1 1471.7,1135.3 C1472.1,1129.5 1472.5,1122.1 1471.7,1116.5 C1470.9,1110.9 1469.6,1105.0 1466.7,1101.5 C1463.8,1098.0 1458.5,1096.7 1454.1,1095.2 C1449.7,1093.7 1446.5,1093.2 1440.4,1092.7 C1434.4,1092.2 1423.7,1092.3 1417.8,1092.5 C1411.9,1092.7 1406.1,1091.5 1405.3,1094.0 Z"/><path d="M1392.8,1072.7 C1391.0,1066.9 1388.4,1060.4 1389.0,1055.2 C1389.6,1050.0 1393.0,1045.6 1396.5,1041.4 C1400.0,1037.2 1405.7,1033.0 1410.3,1030.1 C1414.9,1027.2 1420.1,1025.1 1424.1,1023.8 C1428.1,1022.5 1431.0,1021.9 1434.1,1022.3 C1437.2,1022.7 1440.6,1023.8 1442.9,1026.3 C1445.2,1028.8 1445.8,1034.7 1447.9,1037.6 C1450.0,1040.5 1451.9,1042.7 1455.4,1043.9 C1459.0,1045.2 1465.2,1043.6 1469.2,1045.1 C1473.2,1046.6 1477.1,1049.2 1479.2,1052.7 C1481.3,1056.2 1482.1,1061.8 1481.7,1066.4 C1481.3,1071.0 1479.6,1076.7 1476.7,1080.2 C1473.8,1083.8 1469.8,1086.0 1464.2,1087.7 C1458.6,1089.4 1450.6,1089.6 1442.9,1090.2 C1435.2,1090.8 1425.0,1091.5 1417.8,1091.5 C1410.6,1091.5 1404.2,1093.1 1400.0,1090.0 C1395.8,1086.9 1394.6,1078.5 1392.8,1072.7 Z"/></g><g fill="#fff"><circle cx="1381.6" cy="1091.2" r="11"/><path d="M1379.6,1075.4 Q1368.7,1068.7 1344.0,1041.2 Q1364.6,1072.3 1374.6,1079.9 Z"/><path d="M1376.9,1066.0 Q1373.8,1057.6 1360.6,1034.0 Q1369.3,1059.4 1371.3,1068.2 Z"/><path d="M1383.8,1069.4 Q1382.8,1059.2 1372.6,1029.9 Q1376.9,1060.3 1376.4,1070.8 Z"/><path d="M1376.4,1081.5 Q1368.2,1081.3 1344.0,1078.4 Q1366.9,1087.2 1374.8,1088.8 Z"/><path d="M1371.8,1097.7 Q1365.3,1102.5 1350.8,1122.0 Q1369.0,1106.5 1376.4,1102.7 Z"/><path d="M1373.4,1101.7 Q1371.4,1105.6 1365.8,1117.5 Q1374.9,1108.0 1377.8,1104.7 Z"/><path d="M1377.3,1100.6 Q1375.8,1106.1 1371.8,1122.7 Q1380.3,1107.8 1382.9,1102.8 Z"/><path d="M1380.5,1102.5 Q1382.2,1110.9 1384.6,1136.3 Q1387.6,1110.8 1387.3,1102.4 Z"/><path d="M1384.7,1103.8 Q1386.0,1111.5 1393.6,1134.0 Q1390.7,1110.6 1390.6,1102.6 Z"/><path d="M1398.8,1107.1 Q1406.2,1111.3 1424.5,1128.0 Q1410.1,1107.4 1403.6,1102.3 Z"/><path d="M1401.0,1102.7 Q1407.9,1106.5 1429.0,1117.5 Q1410.6,1102.5 1404.3,1097.7 Z"/><path d="M1401.8,1100.1 Q1407.8,1101.2 1426.0,1103.9 Q1409.2,1096.6 1403.5,1094.3 Z"/><path d="M1404.7,1090.3 Q1414.7,1086.3 1440.3,1066.0 Q1411.5,1080.5 1400.7,1083.0 Z"/><path d="M1403.2,1084.4 Q1408.0,1079.2 1422.2,1063.3 Q1404.8,1075.6 1399.2,1079.9 Z"/></g><g stroke="#fff" fill="none" stroke-width="3.6" stroke-linecap="round" stroke-linejoin="round"><path d="M1381.6,1073.1 L1387.6,1053.6 L1398.9,1037.8 L1417.7,1025.0 L1432.7,1020.5"/><path d="M1374.1,1080.6 L1357.6,1067.1 L1335.0,1055.1 L1312.4,1047.6"/><path d="M1375.6,1092.7 L1357.6,1091.2 L1342.5,1100.2 L1327.5,1111.5"/><path d="M1387.6,1101.7 L1402.7,1111.5 L1410.2,1130.3 L1412.4,1152.8"/><path d="M1402.7,1092.7 L1425.2,1088.9 L1455.3,1089.7 L1477.9,1091.2"/></g><path d="M1395.6,1095.6 L1395.4,1094.6 L1395.2,1093.4 L1395.0,1092.2 L1394.8,1090.9 L1394.7,1089.6 L1394.6,1088.3 L1394.6,1087.1 L1394.6,1086.0 L1394.8,1084.6 L1395.0,1082.9 L1395.3,1081.2 L1395.6,1079.5 L1396.0,1077.7 L1396.5,1076.1 L1397.0,1074.5 L1397.5,1073.0 L1398.1,1071.7 L1398.8,1070.3 L1399.6,1068.9 L1400.4,1067.5 L1401.3,1066.1 L1402.3,1064.7 L1403.4,1063.3 L1404.4,1062.0 L1405.5,1060.7 L1406.6,1059.4 L1407.8,1058.2 L1409.0,1057.0 L1410.2,1055.9 L1411.5,1054.7 L1412.9,1053.6 L1414.4,1052.4 L1415.9,1051.3 L1417.5,1050.1 L1419.2,1049.0 L1421.0,1047.9 L1422.8,1046.8 L1424.6,1045.7 L1426.4,1044.8 L1428.1,1043.9 L1429.8,1043.1 L1431.5,1042.3 L1433.2,1041.6 L1434.9,1041.0 L1436.7,1040.4 L1438.4,1039.8 L1440.1,1039.3 L1441.8,1038.8 L1443.4,1038.4 L1445.0,1038.1 L1446.7,1037.9 L1448.5,1037.6 L1450.2,1037.4 L1452.0,1037.2 L1453.8,1037.0 L1455.6,1036.8 L1457.4,1036.6 L1459.2,1036.4 L1461.1,1036.2 L1462.9,1036.0 L1464.6,1035.9 L1466.2,1035.7 L1467.5,1035.6 L1468.5,1035.5 L1467.5,1023.5 L1466.5,1023.6 L1465.2,1023.6 L1463.7,1023.7 L1461.9,1023.8 L1460.1,1023.9 L1458.1,1024.1 L1456.2,1024.2 L1454.4,1024.4 L1452.6,1024.5 L1450.9,1024.7 L1449.0,1024.8 L1447.1,1024.9 L1445.1,1025.1 L1443.0,1025.4 L1440.9,1025.7 L1438.8,1026.2 L1436.7,1026.7 L1434.7,1027.2 L1432.7,1027.8 L1430.6,1028.4 L1428.5,1029.2 L1426.5,1029.9 L1424.4,1030.8 L1422.3,1031.7 L1420.2,1032.7 L1418.1,1033.8 L1416.0,1034.9 L1413.9,1036.1 L1411.9,1037.3 L1409.8,1038.6 L1407.9,1039.9 L1406.0,1041.2 L1404.3,1042.5 L1402.5,1043.8 L1400.9,1045.2 L1399.3,1046.6 L1397.7,1048.0 L1396.2,1049.5 L1394.8,1051.1 L1393.4,1052.6 L1392.0,1054.2 L1390.7,1055.9 L1389.4,1057.6 L1388.1,1059.3 L1386.9,1061.2 L1385.8,1063.1 L1384.7,1065.1 L1383.7,1067.2 L1382.8,1069.3 L1382.0,1071.6 L1381.3,1073.8 L1380.8,1076.0 L1380.3,1078.2 L1379.8,1080.4 L1379.5,1082.4 L1379.2,1084.4 L1379.0,1086.6 L1379.0,1088.7 L1379.0,1090.8 L1379.2,1092.6 L1379.4,1094.2 L1379.5,1095.5 L1379.6,1096.5 L1379.6,1097.2 Z" fill="#fff"/><circle cx="1387.6" cy="1096.4" r="8.5" fill="#fff"/><path d="M1393.1,1095.9 L1392.9,1094.9 L1392.8,1093.8 L1392.6,1092.5 L1392.4,1091.2 L1392.2,1089.8 L1392.1,1088.4 L1392.1,1087.0 L1392.1,1085.7 L1392.3,1084.2 L1392.5,1082.5 L1392.8,1080.7 L1393.2,1078.9 L1393.6,1077.1 L1394.1,1075.3 L1394.6,1073.6 L1395.2,1072.1 L1395.9,1070.6 L1396.6,1069.1 L1397.4,1067.6 L1398.3,1066.1 L1399.3,1064.6 L1400.3,1063.2 L1401.4,1061.8 L1402.5,1060.4 L1403.7,1059.0 L1404.8,1057.7 L1406.0,1056.4 L1407.3,1055.2 L1408.6,1054.0 L1409.9,1052.8 L1411.4,1051.6 L1412.9,1050.4 L1414.5,1049.2 L1416.1,1048.1 L1417.9,1046.9 L1419.7,1045.7 L1421.6,1044.6 L1423.4,1043.5 L1425.2,1042.6 L1427.0,1041.6 L1428.8,1040.8 L1430.6,1040.0 L1432.3,1039.3 L1434.1,1038.6 L1435.9,1038.0 L1437.7,1037.4 L1439.5,1036.9 L1441.2,1036.4 L1442.9,1036.0 L1444.7,1035.7 L1446.4,1035.4 L1448.2,1035.1 L1450.0,1034.9 L1451.8,1034.7 L1453.6,1034.5 L1455.4,1034.3 L1457.2,1034.1 L1459.0,1033.9 L1460.9,1033.7 L1462.7,1033.5 L1464.4,1033.4 L1466.0,1033.2 L1467.3,1033.1 L1468.3,1033.0 L1467.7,1026.0 L1466.7,1026.1 L1465.4,1026.1 L1463.9,1026.2 L1462.1,1026.3 L1460.3,1026.4 L1458.3,1026.6 L1456.4,1026.7 L1454.6,1026.9 L1452.9,1027.0 L1451.1,1027.1 L1449.3,1027.3 L1447.4,1027.4 L1445.4,1027.6 L1443.4,1027.9 L1441.4,1028.2 L1439.4,1028.6 L1437.4,1029.1 L1435.4,1029.6 L1433.4,1030.2 L1431.4,1030.8 L1429.4,1031.5 L1427.4,1032.3 L1425.4,1033.1 L1423.4,1034.0 L1421.4,1034.9 L1419.3,1036.0 L1417.3,1037.1 L1415.2,1038.2 L1413.2,1039.4 L1411.2,1040.7 L1409.3,1041.9 L1407.5,1043.2 L1405.8,1044.5 L1404.1,1045.7 L1402.5,1047.1 L1401.0,1048.4 L1399.5,1049.8 L1398.0,1051.2 L1396.6,1052.7 L1395.3,1054.2 L1394.0,1055.8 L1392.7,1057.4 L1391.4,1059.0 L1390.2,1060.7 L1389.1,1062.5 L1388.0,1064.3 L1386.9,1066.2 L1386.0,1068.1 L1385.2,1070.2 L1384.4,1072.3 L1383.8,1074.4 L1383.2,1076.6 L1382.7,1078.7 L1382.3,1080.8 L1382.0,1082.7 L1381.7,1084.7 L1381.5,1086.7 L1381.5,1088.7 L1381.5,1090.6 L1381.7,1092.3 L1381.8,1093.9 L1382.0,1095.2 L1382.1,1096.2 L1382.1,1096.9 Z" fill="url(#sg)"/><circle cx="1387.6" cy="1096.4" r="5.5" fill="#f0b445"/><path d="M1462.0,1026.0 C1462.7,1024.3 1467.3,1023.6 1470.0,1023.0 C1472.7,1022.4 1475.5,1022.5 1478.0,1022.5 C1480.5,1022.5 1483.1,1022.2 1485.0,1023.0 C1486.9,1023.8 1489.0,1025.5 1489.5,1027.0 C1490.0,1028.5 1489.2,1030.6 1488.0,1032.0 C1486.8,1033.4 1484.3,1035.0 1482.0,1035.5 C1479.7,1036.0 1476.7,1035.4 1474.0,1035.0 C1471.3,1034.6 1468.0,1034.5 1466.0,1033.0 C1464.0,1031.5 1461.3,1027.7 1462.0,1026.0 Z" fill="#e2472b"/></svg>
<div class="a" style="left:612px;top:417px;width:1206px;height:4px;background:#3a7ddf"></div>
<div class="a" style="left:612px;top:1341px;width:1206px;height:3px;background:#3a7ddf"></div>
<div class="a" style="left:612px;top:417px;width:3px;height:927px;background:#3a7ddf"></div>
<div class="a" style="left:1815px;top:417px;width:3px;height:927px;background:#3a7ddf"></div>
<div class="a" style="left:604px;top:409px;width:18px;height:18px;background:#f2f4f8;border:2px solid #3a7ddf"></div>
<div class="a" style="left:604px;top:871px;width:18px;height:18px;background:#f2f4f8;border:2px solid #3a7ddf"></div>
<div class="a" style="left:604px;top:1333px;width:18px;height:18px;background:#f2f4f8;border:2px solid #3a7ddf"></div>
<div class="a" style="left:1206px;top:409px;width:18px;height:18px;background:#f2f4f8;border:2px solid #3a7ddf"></div>
<div class="a" style="left:1206px;top:1333px;width:18px;height:18px;background:#f2f4f8;border:2px solid #3a7ddf"></div>
<div class="a" style="left:1807px;top:409px;width:18px;height:18px;background:#f2f4f8;border:2px solid #3a7ddf"></div>
<div class="a" style="left:1807px;top:871px;width:18px;height:18px;background:#f2f4f8;border:2px solid #3a7ddf"></div>
<div class="a" style="left:1807px;top:1333px;width:18px;height:18px;background:#f2f4f8;border:2px solid #3a7ddf"></div>
<div class="a" style="left:1737px;top:818px;width:147px;height:115px;border:15px solid #a90000"></div>
<div class="a" style="left:1737px;top:1283px;width:147px;height:115px;border:15px solid #a90000"></div>
<div class="a" style="left:41px;top:230px;width:78px;height:1426px;box-shadow:0 1px 5px 2px rgba(0,0,0,0.35);border-radius:5px 5px 0 0"></div><div class="a" style="left:41px;top:230px;width:78px;height:1426px;background:#535353;border-radius:5px 5px 0 0;border:1px solid #3a3a3a"></div><div class="a" style="left:41px;top:230px;width:78px;height:28px;background:#3e3e3e;border-radius:5px 5px 0 0;border-bottom:2px solid #333"></div><svg class="a" style="left:52px;top:239px" width="14" height="14" viewBox="0 0 14 14"><path d="M2,2 L12,12 M12,2 L2,12" stroke="#c8c8c8" stroke-width="3"/></svg><svg class="a" style="left:90px;top:239px" width="16" height="13" viewBox="0 0 16 13"><path d="M1,1 L6,6.5 L1,12 M9,1 L14,6.5 L9,12" stroke="#d0d0d0" stroke-width="2.2" fill="none"/></svg><div class="a" style="left:61px;top:264px;width:39px;height:8px;background:repeating-linear-gradient(90deg,#3a3a3a 0 2px,transparent 2px 4px)"></div><svg class="a" style="left:60px;top:296.7px" width="48" height="40" viewBox="0 0 48 40"><g fill="none" stroke="#d9d9d9" stroke-width="3"><path d="M20,9 V31 M9,20 H31"/></g><g fill="#d9d9d9"><path d="M20,4 L13.5,11.5 H26.5Z M20,36 L13.5,28.5 H26.5Z M4,20 L11.5,13.5 V26.5Z M36,20 L28.5,13.5 V26.5Z"/></g><path d="M45,31 L45,38 L38,38 Z" fill="#a6a6a6"/></svg><svg class="a" style="left:60px;top:348.7px" width="48" height="40" viewBox="0 0 48 40"><rect x="6" y="8" width="29" height="24" fill="none" stroke="#d9d9d9" stroke-width="3" stroke-dasharray="6 4.5"/><path d="M45,31 L45,38 L38,38 Z" fill="#a6a6a6"/></svg><svg class="a" style="left:60px;top:400.6px" width="48" height="40" viewBox="0 0 48 40"><g fill="none" stroke="#d9d9d9" stroke-width="2.6"><ellipse cx="21" cy="15" rx="14.5" ry="10"/><path d="M10,22 C4,24 6,30 11,29 C15,28 14,24 11,23 M12,29 C16,32 14,35 13,36"/></g><path d="M45,31 L45,38 L38,38 Z" fill="#a6a6a6"/></svg><svg class="a" style="left:60px;top:452.6px" width="48" height="40" viewBox="0 0 48 40"><g fill="#d9d9d9"><rect x="2.7" y="14.5" width="2.3" height="2.3"/><rect x="2.7" y="18.5" width="2.3" height="2.3"/><rect x="2.7" y="22.5" width="2.3" height="2.3"/><rect x="2.7" y="26.5" width="2.3" height="2.3"/><rect x="4.8" y="10.7" width="2.3" height="2.3"/><rect x="8.8" y="8.4" width="2.3" height="2.3"/><rect x="12.8" y="8.4" width="2.3" height="2.3"/><rect x="16.9" y="10.7" width="2.3" height="2.3"/><rect x="18.9" y="14.5" width="2.3" height="2.3"/><rect x="4.8" y="30.4" width="2.3" height="2.3"/><rect x="8.8" y="32.4" width="2.3" height="2.3"/><rect x="12.8" y="32.4" width="2.3" height="2.3"/><path d="M38,5 L28.5,16.5 L32.5,19.5 Z"/><path d="M28,18 C23,17.5 20,22 19.5,26 C19,28 18.5,29.5 17,30.5 C22,31 29,29.5 31.5,25 C33,22.5 32,19.5 28,18 Z"/></g><path d="M45,31 L45,38 L38,38 Z" fill="#a6a6a6"/></svg><svg class="a" style="left:60px;top:504.5px" width="48" height="40" viewBox="0 0 48 40"><g fill="none" stroke="#d9d9d9" stroke-width="3"><path d="M3,7 H10 M13,2 V31 H33 M35,31 H40 M15,10 H31 V38"/></g><path d="M45,31 L45,38 L38,38 Z" fill="#a6a6a6"/></svg><svg class="a" style="left:60px;top:556.5px" width="48" height="40" viewBox="0 0 48 40"><g fill="none" stroke="#d9d9d9" stroke-width="2.6"><rect x="5" y="6" width="29" height="26" fill="#6a6a6a"/><path d="M5,6 L34,32 M34,6 L5,32"/></g><g fill="#d9d9d9"><rect x="3" y="4" width="5" height="5"/><rect x="31" y="4" width="5" height="5"/><rect x="3" y="29" width="5" height="5"/><rect x="31" y="29" width="5" height="5"/></g></svg><svg class="a" style="left:60px;top:608.5px" width="48" height="40" viewBox="0 0 48 40"><path d="M8,33 L24,14" stroke="#d9d9d9" stroke-width="7" stroke-linecap="round" fill="none"/><path d="M8.5,32.5 L23,16" stroke="#535353" stroke-width="2.5" stroke-linecap="round"/><path d="M19,10 L29,20 L33,16 L31,14 C36,9 34,4 29,6 L25,10 L23,8 Z" fill="#d9d9d9"/><path d="M45,31 L45,38 L38,38 Z" fill="#a6a6a6"/></svg><svg class="a" style="left:60px;top:660.4px" width="48" height="40" viewBox="0 0 48 40"><g transform="rotate(-40 21 21)"><rect x="6" y="14" width="30" height="14" rx="3" fill="#d9d9d9"/><g fill="#535353"><circle cx="17" cy="18.5" r="1.4"/><circle cx="21" cy="18.5" r="1.4"/><circle cx="25" cy="18.5" r="1.4"/><circle cx="17" cy="23.5" r="1.4"/><circle cx="21" cy="23.5" r="1.4"/><circle cx="25" cy="23.5" r="1.4"/></g><path d="M13,14 V28 M29,14 V28" stroke="#535353" stroke-width="1.6"/></g><path d="M4,16 C3,8 10,5 15,8" fill="none" stroke="#d9d9d9" stroke-width="2.2" stroke-dasharray="1.5 3"/><path d="M45,31 L45,38 L38,38 Z" fill="#a6a6a6"/></svg><svg class="a" style="left:60px;top:712.4px" width="48" height="40" viewBox="0 0 48 40"><g fill="none" stroke="#d9d9d9" stroke-width="2.6" stroke-linejoin="round"><path d="M6,33 L9,24 L28,5 L34,11 L15,30 Z M9,24 L15,30 M25,8 L31,14"/></g><path d="M45,31 L45,38 L38,38 Z" fill="#a6a6a6"/></svg><svg class="a" style="left:60px;top:764.3px" width="48" height="40" viewBox="0 0 48 40"><g fill="#d9d9d9"><circle cx="20" cy="8.5" r="6"/><rect x="17.5" y="12" width="5" height="8"/><path d="M6,27 C6,21 10,21 14,20 H26 C30,21 34,21 34,27 Z"/><rect x="6" y="30" width="28" height="3"/></g><path d="M45,31 L45,38 L38,38 Z" fill="#a6a6a6"/></svg><svg class="a" style="left:60px;top:816.3px" width="48" height="40" viewBox="0 0 48 40"><g fill="#d9d9d9"><path d="M37,1 L26,18 L30.5,21 Z M25.5,18.5 C21,18 18.5,21 17.5,24 C16.5,27.5 14.5,29.5 11,30.5 C19,33 28,30 30.5,22.5 Z"/><path d="M2,11 L10,5 L11,14 Z"/><circle cx="33" cy="13" r="1.4"/><circle cx="33" cy="18" r="1.4"/><circle cx="31" cy="23" r="1.4"/><circle cx="27" cy="27" r="1.4"/></g><path d="M9,10 C13,5 19,5 22,9" fill="none" stroke="#d9d9d9" stroke-width="2.6"/><path d="M45,31 L45,38 L38,38 Z" fill="#a6a6a6"/></svg><svg class="a" style="left:60px;top:868.3px" width="48" height="40" viewBox="0 0 48 40"><g fill="none" stroke="#d9d9d9" stroke-width="2.6" stroke-linejoin="round"><path d="M4,28 L22,10 L31,19 L21,30 Z M4,29 V31 H36"/></g><path d="M15,17 L28,4 L37,13 L24,26Z" fill="#d9d9d9"/><path d="M45,31 L45,38 L38,38 Z" fill="#a6a6a6"/></svg><svg class="a" style="left:60px;top:920.2px" width="48" height="40" viewBox="0 0 48 40"><defs><linearGradient id="tg"><stop offset="0" stop-color="#111"/><stop offset="1" stop-color="#eee"/></linearGradient></defs><rect x="6" y="7" width="29" height="25" fill="url(#tg)" stroke="#d9d9d9" stroke-width="2.6"/><path d="M45,31 L45,38 L38,38 Z" fill="#a6a6a6"/></svg><svg class="a" style="left:60px;top:972.2px" width="48" height="40" viewBox="0 0 48 40"><path d="M20,4 C24,12 30,17 30,24 C30,30 25,34 20,34 C15,34 10,30 10,24 C10,17 16,12 20,4Z" fill="#d9d9d9"/><path d="M45,31 L45,38 L38,38 Z" fill="#a6a6a6"/></svg><svg class="a" style="left:60px;top:1024.1px" width="48" height="40" viewBox="0 0 48 40"><circle cx="24" cy="14" r="10.5" fill="#d9d9d9"/><path d="M7,34 L17,23" stroke="#d9d9d9" stroke-width="3.2" stroke-linecap="round"/><path d="M45,31 L45,38 L38,38 Z" fill="#a6a6a6"/></svg><svg class="a" style="left:60px;top:1076.1px" width="48" height="40" viewBox="0 0 48 40"><g fill="none" stroke="#d9d9d9" stroke-width="2.4" stroke-linejoin="round"><path d="M12,33 L16,19 L29,7 L35,13 L23,26 Z M12,33 L22,23"/><path d="M10,8 C3,12 2,19 6,25 C8,28 11,30 13,32"/><circle cx="9" cy="9" r="2.6"/><circle cx="5" cy="23" r="2.6"/></g><path d="M26,5 L31,0 L38,7 L33,12Z" fill="#d9d9d9"/><circle cx="22" cy="20" r="2.2" fill="#d9d9d9"/><path d="M45,31 L45,38 L38,38 Z" fill="#a6a6a6"/></svg><svg class="a" style="left:60px;top:1128.1px" width="48" height="40" viewBox="0 0 48 40"><g fill="#d9d9d9"><rect x="8" y="7" width="26" height="3.5"/><rect x="8" y="7" width="3" height="8"/><rect x="31" y="7" width="3" height="8"/><rect x="19.5" y="8" width="3.5" height="24"/><rect x="14" y="30" width="14" height="3.5"/></g><path d="M45,31 L45,38 L38,38 Z" fill="#a6a6a6"/></svg><svg class="a" style="left:60px;top:1180.0px" width="48" height="40" viewBox="0 0 48 40"><path d="M12,4 V30 L18,24 L23,34 L27,32 L22,22 L31,22 Z" fill="#111" stroke="#d9d9d9" stroke-width="2.2" stroke-linejoin="round"/><path d="M45,31 L45,38 L38,38 Z" fill="#a6a6a6"/></svg><svg class="a" style="left:60px;top:1232.0px" width="48" height="40" viewBox="0 0 48 40"><rect x="6" y="7" width="29" height="24" fill="#6a6a6a" stroke="#d9d9d9" stroke-width="2.8"/><path d="M45,31 L45,38 L38,38 Z" fill="#a6a6a6"/></svg><svg class="a" style="left:60px;top:1283.9px" width="48" height="40" viewBox="0 0 48 40"><g fill="#d9d9d9"><rect x="12.5" y="6" width="4" height="17" rx="2"/><rect x="17.5" y="3" width="4" height="18" rx="2"/><rect x="22.5" y="4" width="4" height="18" rx="2"/><rect x="27.5" y="8" width="4" height="16" rx="2"/><path d="M12.5,18 H31.5 V24 C31.5,31 27,35 21,35 C17,35 14,33 11,30 L4,22 C3,20 5,18 7,19.5 L12.5,23 Z"/></g><path d="M45,31 L45,38 L38,38 Z" fill="#a6a6a6"/></svg><svg class="a" style="left:60px;top:1335.9px" width="48" height="40" viewBox="0 0 48 40"><g fill="none" stroke="#d9d9d9" stroke-width="3"><circle cx="17" cy="16" r="11"/><path d="M25,24 L34,33" stroke-linecap="round"/><path d="M11,14 C12,11 15,9 18,10" stroke-width="2"/></g></svg><svg class="a" style="left:60px;top:1387.9px" width="48" height="40" viewBox="0 0 48 40"><g fill="#d9d9d9"><circle cx="9" cy="20" r="3.6"/><circle cx="20" cy="20" r="3.6"/><circle cx="31" cy="20" r="3.6"/></g><path d="M45,31 L45,38 L38,38 Z" fill="#a6a6a6"/></svg><svg class="a" style="left:50px;top:1446px" width="22" height="22" viewBox="0 0 22 22"><rect x="8" y="8" width="12" height="12" fill="#e6e6e6"/><rect x="1.5" y="1.5" width="11" height="11" fill="#111" stroke="#e6e6e6" stroke-width="2"/></svg><svg class="a" style="left:85px;top:1446px" width="22" height="22" viewBox="0 0 22 22"><g fill="none" stroke="#d8d8d8" stroke-width="2.2"><path d="M5,4 H16 V16"/></g><path d="M1,4 L6,0 V8Z M16,21 L12,15 H20Z" fill="#d8d8d8"/></svg><div class="a" style="left:69px;top:1496px;width:40px;height:40px;background:#fff;border:2px solid #222"></div><div class="a" style="left:50px;top:1478px;width:37px;height:37px;background:#8a6daa;border:3px solid #f4f4f4;outline:1.5px solid #222"></div><svg class="a" style="left:62px;top:1556px" width="36" height="30" viewBox="0 0 36 30"><rect x="2" y="2" width="32" height="25" fill="none" stroke="#d8d8d8" stroke-width="2.6"/><circle cx="18" cy="14.5" r="7" fill="none" stroke="#d8d8d8" stroke-width="2.2" stroke-dasharray="1.6 2.4"/></svg><svg class="a" style="left:60px;top:1606px" width="48" height="40" viewBox="0 0 48 40"><g fill="none" stroke="#d8d8d8" stroke-width="2.6"><rect x="12" y="3" width="22" height="18"/><path d="M12,8 H3 V28 H25 V21"/></g><path d="M45,31 L45,38 L38,38 Z" fill="#a6a6a6"/></svg></body></html>
